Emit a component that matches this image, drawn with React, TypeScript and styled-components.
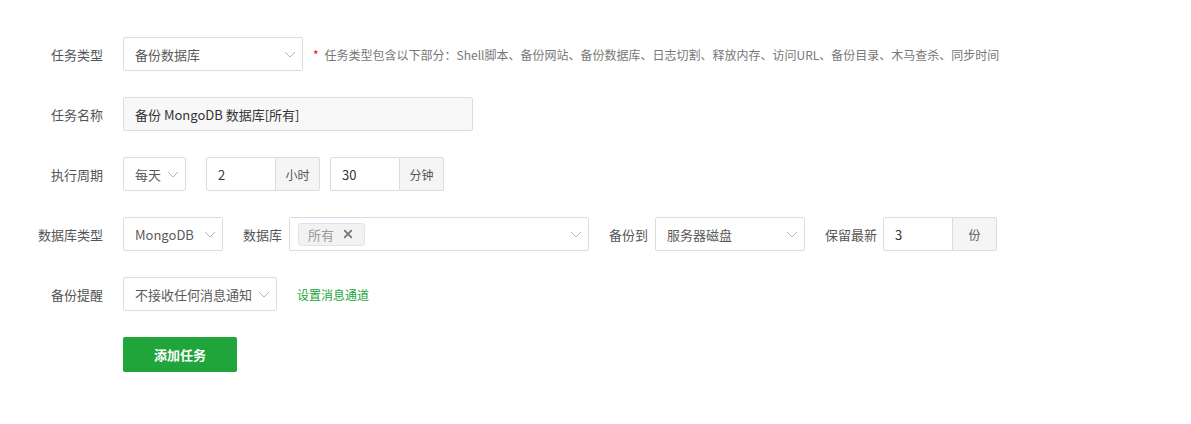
import React from 'react';
import styled, { createGlobalStyle } from 'styled-components';

const GlobalStyle = createGlobalStyle`
  html, body {
    margin: 0;
    padding: 0;
    background: #fff;
  }
  body {
    font-family: "Noto Sans CJK SC", "Noto Sans", sans-serif;
    font-size: 12px;
    color: #555;
  }
`

const Form = styled.div`
  display: flex;
  flex-direction: column;
  gap: 26px;
  padding-top: 37px;
`

const Row = styled.div`
  display: flex;
  align-items: center;
  height: 34px;
`

const Label = styled.div`
  width: 103px;
  margin-right: 20px;
  text-align: right;
  font-size: 13px;
  color: #555;
  flex-shrink: 0;
`

const InlineLabel = styled.div<{ $mr?: number }>`
  margin: 0 ${p => p.$mr ?? 7}px 0 20px;
  font-size: 13px;
  color: #555;
  white-space: nowrap;
`

const SelectBox = styled.div<{ $width: number }>`
  width: ${p => p.$width}px;
  height: 34px;
  box-sizing: border-box;
  border: 1px solid #dcdcdc;
  border-radius: 2px;
  display: flex;
  align-items: center;
  padding: 0 6px 0 11px;
  font-size: 13px;
  color: #5a5a5a;
  background: #fff;
  flex-shrink: 0;
  .value {
    flex: 1;
    white-space: nowrap;
    overflow: hidden;
  }
`

const TextInput = styled.div<{ $width: number; $readonly?: boolean }>`
  width: ${p => p.$width}px;
  height: 34px;
  box-sizing: border-box;
  border: 1px solid #dcdcdc;
  border-radius: 2px;
  display: flex;
  align-items: center;
  padding: 0 11px;
  font-size: 13px;
  color: #333;
  background: ${p => (p.$readonly ? '#f8f8f8' : '#fff')};
  flex-shrink: 0;
`

const InputGroup = styled.div<{ $ml?: number }>`
  display: flex;
  margin-left: ${p => p.$ml ?? 0}px;
  ${TextInput} {
    border-radius: 2px 0 0 2px;
  }
`

const Addon = styled.div<{ $width: number }>`
  width: ${p => p.$width}px;
  height: 34px;
  box-sizing: border-box;
  border: 1px solid #dcdcdc;
  border-left: none;
  border-radius: 0 2px 2px 0;
  background: #f5f5f5;
  display: flex;
  align-items: center;
  justify-content: center;
  font-size: 12px;
  color: #555;
`

const Tag = styled.div`
  display: flex;
  align-items: center;
  gap: 9px;
  height: 23px;
  box-sizing: border-box;
  padding: 0 11px 0 9px;
  margin-right: auto;
  border: 1px solid #d6e6f7;
  border-radius: 3px;
  background: #f2f2f2;
  color: #999;
  font-size: 13px;
`

const Hint = styled.div`
  margin-left: 10px;
  font-size: 12px;
  color: #777;
  white-space: nowrap;
  .star {
    color: #ef0808;
    margin-right: 6px;
  }
`

const Link = styled.a`
  margin-left: 20px;
  color: #20a53a;
  font-size: 12px;
  text-decoration: none;
  cursor: pointer;
`

const SubmitButton = styled.button`
  margin-left: 123px;
  width: 114px;
  height: 35px;
  border: none;
  border-radius: 2px;
  background: #20a53a;
  color: #fff;
  font-family: inherit;
  font-size: 13px;
  font-weight: bold;
  cursor: pointer;
`

const Chevron = () => (
  <svg width="12" height="7" viewBox="0 0 12 7" style={{ flexShrink: 0 }}>
    <path d="M1 1l5 5 5-5" fill="none" stroke="#b5b5b5" strokeWidth="1" />
  </svg>
)

const Close = () => (
  <svg width="10" height="10" viewBox="0 0 10 10">
    <path d="M1.2 1.2l7.6 7.6M8.8 1.2l-7.6 7.6" stroke="#777" strokeWidth="1.8" />
  </svg>
)

const Select = ({ width, value }: { width: number; value: string }) => (
  <SelectBox $width={width}>
    <span className="value">{value}</span>
    <Chevron />
  </SelectBox>
)

export default function App() {
  return (
    <>
      <GlobalStyle />
      <Form>
        <Row>
          <Label>任务类型</Label>
          <Select width={180} value="备份数据库" />
          <Hint>
            <span className="star">*</span>
            任务类型包含以下部分：Shell脚本、备份网站、备份数据库、日志切割、释放内存、访问URL、备份目录、木马查杀、同步时间
          </Hint>
        </Row>
        <Row>
          <Label>任务名称</Label>
          <TextInput $width={350} $readonly>备份 MongoDB 数据库[所有]</TextInput>
        </Row>
        <Row>
          <Label>执行周期</Label>
          <Select width={63} value="每天" />
          <InputGroup $ml={20}>
            <TextInput $width={70}>2</TextInput>
            <Addon $width={44}>小时</Addon>
          </InputGroup>
          <InputGroup $ml={10}>
            <TextInput $width={70}>30</TextInput>
            <Addon $width={44}>分钟</Addon>
          </InputGroup>
        </Row>
        <Row>
          <Label>数据库类型</Label>
          <Select width={100} value="MongoDB" />
          <InlineLabel>数据库</InlineLabel>
          <SelectBox $width={300} style={{ paddingLeft: 8 }}>
            <Tag>
              所有
              <Close />
            </Tag>
            <Chevron />
          </SelectBox>
          <InlineLabel>备份到</InlineLabel>
          <Select width={150} value="服务器磁盘" />
          <InlineLabel $mr={6}>保留最新</InlineLabel>
          <InputGroup>
            <TextInput $width={70}>3</TextInput>
            <Addon $width={44}>份</Addon>
          </InputGroup>
        </Row>
        <Row>
          <Label>备份提醒</Label>
          <Select width={154} value="不接收任何消息通知" />
          <Link>设置消息通道</Link>
        </Row>
        <div>
          <SubmitButton>添加任务</SubmitButton>
        </div>
      </Form>
    </>
  );
}
